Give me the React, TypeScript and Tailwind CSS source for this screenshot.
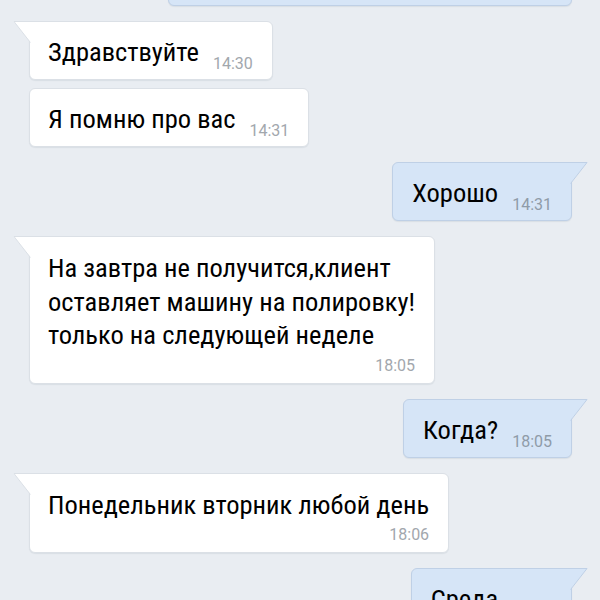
type Msg = {
  out?: boolean;
  lines: string[];
  time: string;
  tail?: boolean;
};

const messages: Msg[][] = [
  [
    { lines: ["Здравствуйте"], time: "14:30", tail: true },
    { lines: ["Я помню про вас"], time: "14:31" },
  ],
  [{ out: true, lines: ["Хорошо"], time: "14:31", tail: true }],
  [
    {
      lines: [
        "На завтра не получится,клиент",
        "оставляет машину на полировку!",
        "только на следующей неделе",
      ],
      time: "18:05",
      tail: true,
    },
  ],
  [{ out: true, lines: ["Когда?"], time: "18:05", tail: true }],
  [{ lines: ["Понедельник вторник любой день"], time: "18:06", tail: true }],
  [{ out: true, lines: ["Среда"], time: "18:07", tail: true }],
];

function Tail({ out }: { out?: boolean }) {
  // little corner that sticks out of the bubble's top
  if (out) {
    return (
      <svg
        className="absolute -right-[17px] -top-px"
        width="18"
        height="23"
        viewBox="0 0 18 23"
      >
        <path d="M0 0 L17.5 0 L0 22 Z" fill="#d6e5f7" />
        <path d="M0 0.5 L17 0.5 L0.6 21.5" fill="none" stroke="#bfd0e6" strokeWidth="1" />
      </svg>
    );
  }
  return (
    <svg
      className="absolute -left-[17px] -top-px"
      width="18"
      height="23"
      viewBox="0 0 18 23"
    >
      <path d="M18 0 L0.5 0 L18 22 Z" fill="#ffffff" />
      <path d="M18 0.5 L1 0.5 L17.4 21.5" fill="none" stroke="#dbe0e6" strokeWidth="1" />
    </svg>
  );
}

function Bubble({ m }: { m: Msg }) {
  const multi = m.lines.length > 1 || m.lines[0].length > 20;
  const base = m.out
    ? "bg-[#d6e5f7] border-[#bfd0e6] mr-[16px] self-end pl-[19px] pr-[19px]"
    : "bg-white border-[#dbe0e6] ml-[17px] self-start pl-[18px] pr-[19px]";
  const corner = m.tail ? (m.out ? "rounded-tr-none" : "rounded-tl-none") : "";
  const timeColor = m.out ? "text-[#8f9ba8]" : "text-[#a2a7ad]";

  if (multi) {
    return (
      <div
        className={`relative w-fit rounded-[6px] border shadow-[0_1px_1px_rgba(40,60,90,0.08)] pt-[14px] pb-[9px] ${base} ${corner}`}
      >
        {m.tail && <Tail out={m.out} />}
        <div className="font-['Roboto_Condensed',Roboto,sans-serif] text-[26.5px] leading-[33.5px] text-black whitespace-nowrap">
          {m.lines.map((l) => (
            <div key={l}>{l}</div>
          ))}
        </div>
        <div
          className={`mt-[6px] text-right font-['Roboto',sans-serif] text-[16px] leading-[16px] ${timeColor}`}
        >
          {m.time}
        </div>
      </div>
    );
  }

  return (
    <div
      className={`relative w-fit flex items-end gap-[14px] rounded-[6px] border shadow-[0_1px_1px_rgba(40,60,90,0.08)] pt-[13px] pb-[10px] ${base} ${corner}`}
    >
      {m.tail && <Tail out={m.out} />}
      <span className="font-['Roboto_Condensed',Roboto,sans-serif] text-[26.5px] leading-[34px] text-black whitespace-nowrap">
        {m.lines[0]}
      </span>
      <span
        className={`-mb-[3px] font-['Roboto',sans-serif] text-[16px] leading-[16px] ${timeColor}`}
      >
        {m.time}
      </span>
    </div>
  );
}

export default function App() {
  return (
    <div className="w-full h-[600px] overflow-hidden bg-[#e9edf2]">
      <div className="flex flex-col gap-[15px] px-[12px]">
        {/* bubble scrolled above the top edge */}
        <div className="self-end mr-[16px] -mt-[54px] h-[60px] w-[404px] rounded-[6px] border border-[#bfd0e6] bg-[#d6e5f7] shadow-[0_1px_1px_rgba(40,60,90,0.08)]" />

        {messages.map((group, i) => (
          <div key={i} className="flex flex-col gap-[8px]">
            {group.map((m) => (
              <Bubble key={m.lines[0]} m={m} />
            ))}
          </div>
        ))}
      </div>
    </div>
  );
}
